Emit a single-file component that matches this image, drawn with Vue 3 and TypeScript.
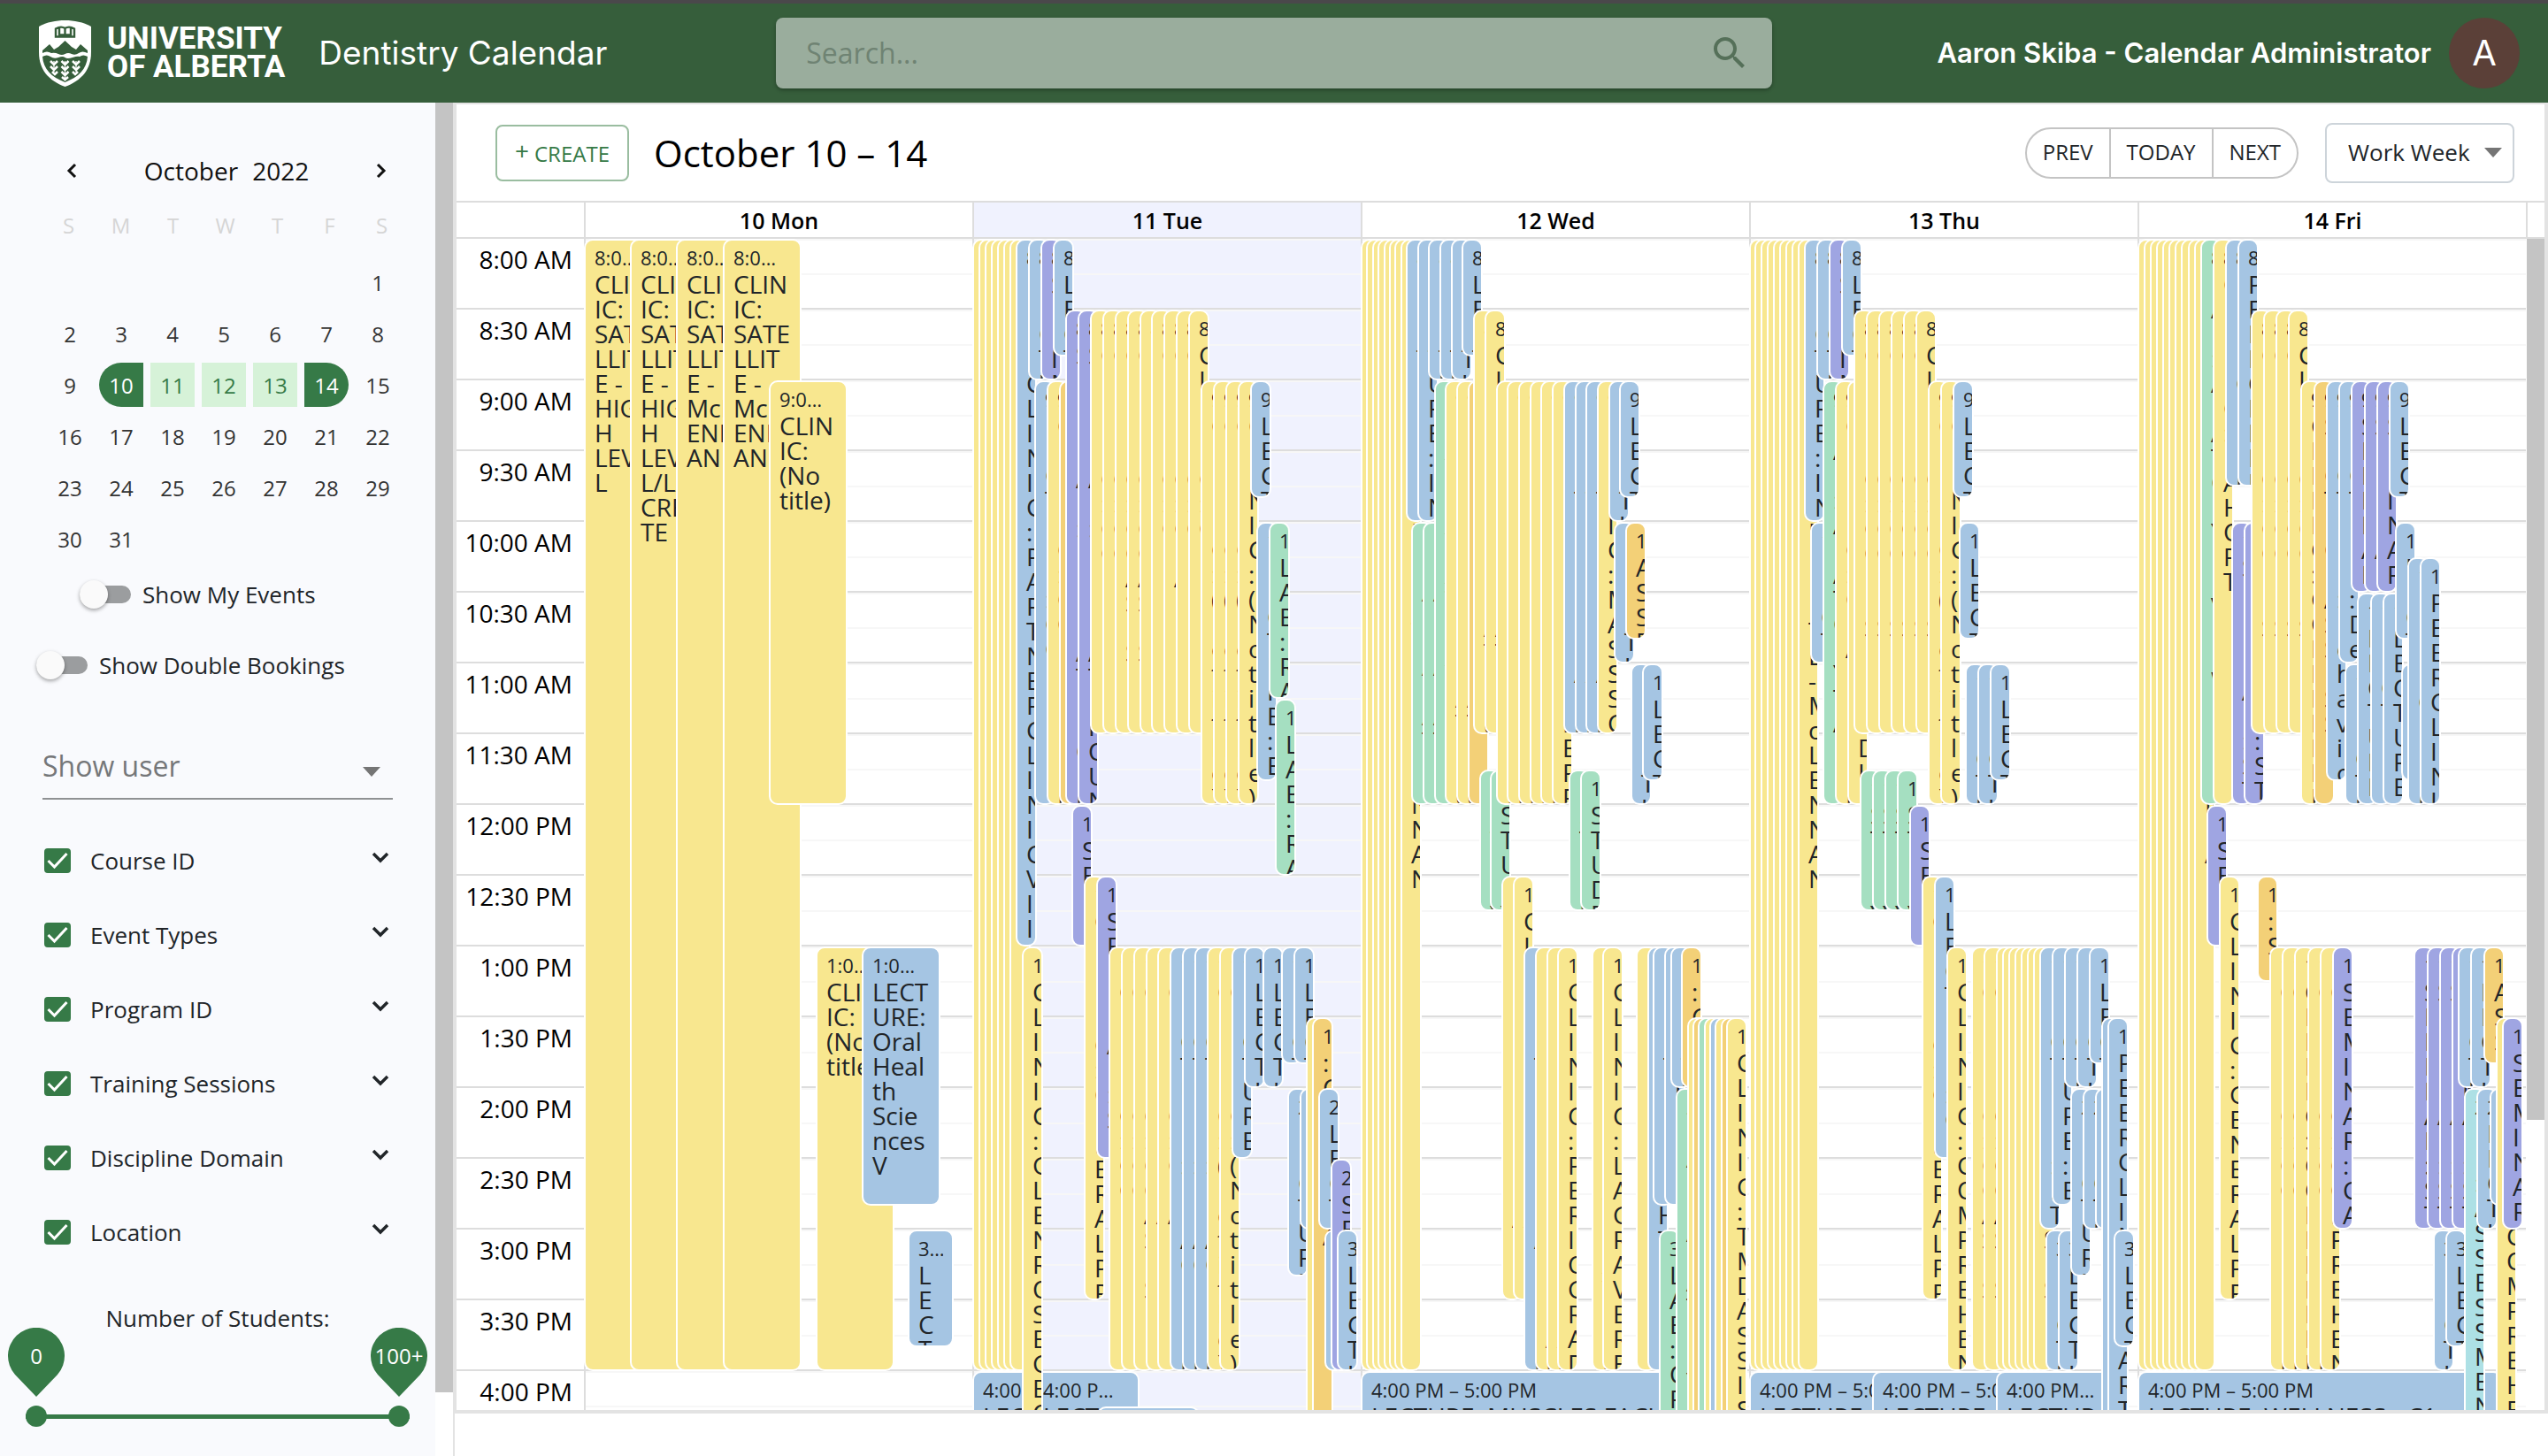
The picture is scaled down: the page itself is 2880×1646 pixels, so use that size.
<script setup lang="ts">
import { computed, reactive, ref } from 'vue'

type Kind = 'clinic' | 'lecture' | 'seminar' | 'lab' | 'assess' | 'peer'

interface CalEvent {
  left: number
  start: number
  end: number
  kind: Kind
  title: string
  width: number
}

interface Day {
  label: string
  today: boolean
  events: CalEvent[]
}

// Event offsets and widths are expressed in units of one day track.
const TRACK = 439
const THIN = 24

const run = (
  lefts: number[],
  start: number,
  end: number,
  kind: Kind,
  title: string,
  width: number = THIN,
): CalEvent[] => lefts.map((left) => ({ left, start, end, kind, title, width }))

// Late-afternoon events lie beneath everything that runs into them.
const layer = (e: CalEvent): number => (e.start >= 480 ? 0 : 1)
const byLeft = (...groups: CalEvent[][]): CalEvent[] =>
  groups.flat().sort((a, b) => layer(a) - layer(b) || a.left - b.left)

// start and end are minutes after 8:00 AM
const days: Day[] = [
  {
    label: '10 Mon',
    today: false,
    events: byLeft(
      run([0], 0, 480, 'clinic', 'CLINIC: SATELLITE - HIGH LEVEL', 89),
      run([52], 0, 480, 'clinic', 'CLINIC: SATELLITE - HIGH LEVEL/LA CRETE', 89),
      run([104, 157], 0, 480, 'clinic', 'CLINIC: SATELLITE - McLENNAN', 89),
      run([209], 60, 240, 'clinic', 'CLINIC: (No title)', 89),
      run([262], 300, 480, 'clinic', 'CLINIC: (No title)', 89),
      run([314], 300, 410, 'lecture', 'LECTURE: Oral Health Sciences V', 89),
      run([366], 420, 470, 'lecture', 'LECTURE: Oral Biology', 52),
    ),
  },
  {
    label: '11 Tue',
    today: true,
    events: byLeft(
      run([0, 7, 14, 21, 28, 35, 42], 0, 480, 'clinic', 'CLINIC: SATELLITE'),
      run([49], 0, 300, 'lecture', 'PEER CLINIC: PARTNER CLINIC VII'),
      run([63], 0, 60, 'lecture', 'LECTURE: PERIO'),
      run([77], 0, 60, 'seminar', 'SEMINAR: PERIO'),
      run([91], 0, 50, 'lecture', 'LECTURE: PERIO'),
      run([70], 60, 240, 'lecture', 'LECTURE: CC'),
      run([84], 60, 240, 'clinic', 'CLINIC: COMPREHENSIVE'),
      run([98], 60, 240, 'assess', 'ASSESSMENT'),
      run([105, 119], 30, 240, 'seminar', 'SEMINAR: PEDIATR ROUNDS'),
      run([133, 147], 30, 210, 'clinic', 'CLINIC: CO'),
      run([161, 175], 30, 210, 'clinic', 'CLINIC: COASIS'),
      run([216], 30, 210, 'clinic', 'CLINIC: GRADE'),
      run([189, 202, 230, 244], 30, 210, 'clinic', 'CLINIC: ORDERED'),
      run([258, 272, 286, 300], 60, 240, 'clinic', 'CLINIC: (No title)'),
      run([314], 60, 110, 'lecture', 'LECTURE: ENDO'),
      run([321], 120, 230, 'lecture', 'LECTURE: ENDO'),
      run([335], 120, 195, 'lab', 'LAB: RADIOLOGY'),
      run([342], 195, 270, 'lab', 'LAB: RADIOLOGY'),
      run([112], 240, 300, 'seminar', 'SEMINAR: ETHICS'),
      run([126], 270, 450, 'clinic', 'CLINIC: GENERAL PRACTICE'),
      run([140], 270, 390, 'seminar', 'SEMINAR: SURGERY'),
      run([56], 300, 540, 'clinic', 'CLINIC: GLENROSE GEORGE'),
      run([154, 168], 300, 480, 'clinic', 'CLINIC: CO'),
      run([182], 300, 480, 'clinic', 'CLINIC: COASIS'),
      run([196, 209], 300, 480, 'clinic', 'CLINIC: GRADE'),
      run([223, 237, 251], 300, 480, 'lecture', 'LECTURE: PLACEMENT'),
      run([265, 279], 300, 480, 'clinic', 'CLINIC: (No title)'),
      run([293], 300, 390, 'lecture', 'LECTURE: ORTHO'),
      run([307, 328], 300, 360, 'lecture', 'LECTURE: ORTHO'),
      run([349, 363], 300, 350, 'lecture', 'LECTURE: ORTHO'),
      run([356], 360, 440, 'lecture', 'LECTURE: ANATOMY'),
      run([370], 360, 420, 'lecture', 'LECTURE: ANATOMY'),
      run([377], 330, 540, 'clinic', 'CLINIC: ORAL SURGERY'),
      run([384], 330, 540, 'assess', ': CLINICA'),
      run([391], 360, 420, 'lecture', 'LECTURE: ANATOMY'),
      run([398], 420, 480, 'lecture', 'LECTURE: ANATOMY'),
      run([405], 390, 480, 'seminar', 'SEMINAR: ETHICS'),
      run([412], 420, 480, 'lecture', 'LECTURE: ANATOMY'),
      run([0], 480, 540, 'lecture', 'LECTURE: PHARMACOLOGY', 119),
      run([68], 480, 540, 'lecture', 'LECTURE: PHARMACOLOGY', 121),
      run([141], 495, 540, 'lecture', 'LECTURE: PHARMACOLOGY', 116),
    ),
  },
  {
    label: '12 Wed',
    today: false,
    events: byLeft(
      run([0, 6, 13, 19, 26, 32, 38, 45], 0, 480, 'clinic', 'CLINIC: SATELLITE - McLENNAN'),
      run([51, 64], 0, 120, 'lecture', 'LECTURE: INTRODUCTION'),
      run([76, 89, 102], 0, 60, 'lecture', 'LECTURE: PERIO'),
      run([114], 0, 50, 'lecture', 'LECTURE: PERIO'),
      run([57, 70], 120, 240, 'lab', 'LAB: ANATOMY'),
      run([83], 60, 240, 'lab', 'LAB: ANATOMY'),
      run([95, 108], 60, 240, 'clinic', 'CLINIC: PEDIATRIC'),
      run([121], 60, 240, 'assess', 'OSCE'),
      run([127, 140], 30, 210, 'clinic', 'CLINIC: PEDIATRIC'),
      run([134, 146], 225, 285, 'lab', 'STUDY'),
      run([153, 165, 178, 191, 203, 216], 60, 240, 'clinic', 'CLINIC: EMERG PERFORM'),
      run([235, 248], 225, 285, 'lab', 'STUDENT'),
      run([229, 242, 254], 60, 210, 'lecture', 'LECTURE: PLACEMENT'),
      run([267], 60, 210, 'clinic', 'CLINIC: MASSSCREEN'),
      run([280], 60, 120, 'lecture', 'LECTURE: ORTHO'),
      run([292], 60, 110, 'lecture', 'LECTURE: ORTHO'),
      run([286], 120, 180, 'lecture', 'LECTURE: ORTHO'),
      run([299], 120, 170, 'assess', 'ASSESSMENT'),
      run([305], 180, 240, 'lecture', 'LECTURE: ORTHO'),
      run([318], 180, 230, 'lecture', 'LECTURE: ORTHO'),
      run([159, 172], 270, 450, 'clinic', 'CLINIC: GENERAL'),
      run([184], 300, 480, 'lecture', 'LECTURE: PLACEMENT'),
      run([197, 210, 222], 300, 480, 'clinic', 'CLINIC: PERIO GRADUATE'),
      run([261, 273], 300, 480, 'clinic', 'CLINIC: LAGRAVERE'),
      run([311], 300, 480, 'clinic', 'CLINIC: PERIO'),
      run([324], 300, 480, 'lecture', 'LECTURE: OHT'),
      run([330, 343], 300, 410, 'lecture', 'LECTURE: OHT'),
      run([350], 300, 360, 'lecture', 'LECTURE: ORTHO'),
      run([362], 300, 360, 'assess', ': CLINICAL'),
      run([337], 420, 540, 'lab', 'LAB: OPERATIVE'),
      run([356], 360, 540, 'lab', 'LAB: ANATOMY'),
      run([369, 388, 400], 330, 540, 'clinic', 'CLINIC: ORTHO'),
      run([375, 407], 330, 540, 'assess', 'OSCE'),
      run([381], 330, 540, 'lab', 'LAB: ANATOMY'),
      run([394], 330, 540, 'lecture', 'LECTURE: ORTHO'),
      run([413], 330, 540, 'clinic', 'CLINIC: TMD ASSISTING'),
      run([0], 480, 540, 'lecture', 'LECTURE: MUSCLES FACIAL', 400),
    ),
  },
  {
    label: '13 Thu',
    today: false,
    events: byLeft(
      run([0, 6, 13, 20, 27, 34, 41, 48, 55], 0, 480, 'clinic', 'CLINIC: SATELLITE - McLENNAN'),
      run([62], 0, 120, 'lecture', 'LECTURE: INTRODUCTION'),
      run([76], 0, 60, 'lecture', 'LECTURE: PERIO'),
      run([90], 0, 60, 'seminar', 'SEMINAR: PERIO'),
      run([104], 0, 50, 'lecture', 'LECTURE: PERIO'),
      run([69], 120, 180, 'lecture', 'LECTURE: PERIO'),
      run([83], 60, 240, 'lab', 'LAB: ANATOMY TA'),
      run([97, 111], 60, 240, 'clinic', 'CLINIC: ORAL MEDIIC'),
      run([118, 132, 146, 160, 174, 188], 30, 210, 'clinic', 'CLINIC: CODES'),
      run([125, 139, 153, 167], 225, 285, 'lab', 'STUDY'),
      run([181], 240, 300, 'seminar', 'SEMINAR: ETHICS'),
      run([202, 216], 60, 240, 'clinic', 'CLINIC: (No title)'),
      run([230], 60, 110, 'lecture', 'LECTURE: ENDO'),
      run([237], 120, 170, 'lecture', 'LECTURE: ENDO'),
      run([244, 258], 180, 240, 'lecture', 'LECTURE: ENDO'),
      run([272], 180, 230, 'lecture', 'LECTURE: ENDO'),
      run([195], 270, 450, 'clinic', 'CLINIC: GENERAL PRACTICE'),
      run([209], 270, 390, 'lecture', 'LECTURE: GENETICS'),
      run([223], 300, 480, 'clinic', 'CLINIC: COMPREHENSIVE'),
      run([251, 265, 279, 286, 293, 300, 307, 314, 321], 300, 480, 'clinic', 'CLINIC: COASIS'),
      run([328], 300, 420, 'lecture', 'LECTURE: ETHICS'),
      run([342], 300, 410, 'lecture', 'LECTURE: ETHICS'),
      run([356, 370], 300, 360, 'lecture', 'LECTURE: ORTHO'),
      run([384], 300, 350, 'lecture', 'LECTURE: ORTHO'),
      run([335, 349], 420, 480, 'lecture', 'LECTURE: ANATOMY'),
      run([363], 360, 440, 'lecture', 'LECTURE: ANATOMY'),
      run([377, 391], 360, 420, 'lecture', 'LECTURE: ANATOMY'),
      run([398, 405], 330, 540, 'lecture', 'PEER CLINIC: PARTNER'),
      run([412], 420, 470, 'lecture', 'LECTURE: ANATOMY'),
      run([0, 139], 480, 540, 'lecture', 'LECTURE: PHARMACOLOGY', 238),
      run([279], 480, 540, 'lecture', 'LECTURE: PHARMACOLOGY', 136),
    ),
  },
  {
    label: '14 Fri',
    today: false,
    events: byLeft(
      run([0, 7, 14, 21, 28, 35, 42, 49, 57, 64], 0, 480, 'clinic', 'CLINIC: SATELLITE - McLENNAN'),
      run([71], 0, 240, 'lab', 'LAB: ANATOMY REVIEW'),
      run([85], 0, 240, 'clinic', 'CLINIC: RAHORT'),
      run([99, 113], 0, 105, 'lecture', 'PEER CLINIC'),
      run([78], 240, 300, 'seminar', 'SEMINAR: ETHICS'),
      run([106, 120], 120, 240, 'seminar', 'SEMINAR: STUDY'),
      run([128, 142, 156, 170], 30, 210, 'clinic', 'CLINIC: CODES'),
      run([184], 60, 240, 'clinic', 'CLINIC: COMPREHENSIVE'),
      run([199], 60, 240, 'assess', 'SECTION ASSESS'),
      run([213], 60, 230, 'lecture', 'LECTURE: Behaviour'),
      run([227], 60, 180, 'lecture', 'LECTURE: Dental'),
      run([241, 256, 270], 60, 150, 'seminar', 'SEMINAR: ETHICS'),
      run([284], 60, 110, 'lecture', 'LECTURE: ENDO'),
      run([234], 180, 240, 'lecture', 'LECTURE: ENDO'),
      run([248, 263, 277], 150, 240, 'lecture', 'LECTURE: ENDO'),
      run([291], 120, 170, 'lecture', 'LECTURE: ENDO'),
      run([298], 180, 230, 'lecture', 'LECTURE: ENDO'),
      run([305, 319], 135, 240, 'lecture', 'PEER CLINIC: PARTNER'),
      run([92], 270, 450, 'clinic', 'CLINIC: GENERAL PRACTICE'),
      run([135], 270, 315, 'assess', ': SIMULATION'),
      run([149, 163, 177, 192, 206], 300, 480, 'clinic', 'CLINIC: COMPREHENSIVE'),
      run([220], 300, 420, 'seminar', 'SEMINAR: CASES'),
      run([312, 327, 341, 355], 300, 420, 'seminar', 'SEMINAR: STATS'),
      run([362, 376], 300, 360, 'lecture', 'LECTURE: ORTHO'),
      run([391], 300, 350, 'assess', 'ASSESSMENT'),
      run([334], 420, 480, 'lecture', 'LECTURE: ANATOMY'),
      run([348], 420, 470, 'lecture', 'LECTURE: ANATOMY'),
      run([369], 360, 540, 'peer', 'PR: ASSESSMENT'),
      run([383], 360, 420, 'lecture', 'LECTURE: ANATOMY'),
      run([398], 360, 410, 'lecture', 'LECTURE: ANATOMY'),
      run([405], 330, 540, 'clinic', 'CLINIC: COMPREHENSIVE'),
      run([412], 330, 420, 'seminar', 'SEMINAR: ETHICS'),
      run([0], 480, 540, 'lecture', 'LECTURE: WELLNESS - C1', 412),
    ),
  },
]

const clock = (minutes: number): string => {
  const total = minutes + 480
  const hour = Math.floor(total / 60)
  const mins = String(total % 60).padStart(2, '0')
  return `${hour > 12 ? hour - 12 : hour}:${mins} ${hour >= 12 ? 'PM' : 'AM'}`
}

const slots = Array.from({ length: 17 }, (_, i) => i * 30)

const SLOT_HEIGHT = 80
const place = (e: CalEvent) => ({
  left: `${(e.left / TRACK) * 100}%`,
  width: `${(e.width / TRACK) * 100}%`,
  top: `${(e.start / 30) * SLOT_HEIGHT}px`,
  height: `${((e.end - e.start) / 30) * SLOT_HEIGHT}px`,
})

const weekdays = ['S', 'M', 'T', 'W', 'T', 'F', 'S']
const monthCells = computed<(number | null)[]>(() => [
  ...Array.from({ length: 6 }, () => null),
  ...Array.from({ length: 31 }, (_, i) => i + 1),
])
const cellClass = (d: number) => ({
  first: d === 10,
  last: d === 14,
  within: d > 10 && d < 14,
})

const filters = reactive([
  { id: 'course', label: 'Course ID', on: true },
  { id: 'types', label: 'Event Types', on: true },
  { id: 'program', label: 'Program ID', on: true },
  { id: 'training', label: 'Training Sessions', on: true },
  { id: 'discipline', label: 'Discipline Domain', on: true },
  { id: 'location', label: 'Location', on: true },
])

const switches = reactive([
  { id: 'mine', label: 'Show My Events', on: false },
  { id: 'double', label: 'Show Double Bookings', on: false },
])

const search = ref('')
const user = ref('')
const view = ref('work_week')
const low = ref(0)
const high = ref(100)
</script>

<template>
  <div class="app">
    <header class="topbar">
      <a class="brand" href="#">
        <svg class="shield" viewBox="0 0 59 75" aria-hidden="true">
          <path fill="#fff" d="M0 7C9 2 19 0 29.500 0S50 2 59 7V36C59 56 48 68 29.500 75C11 68 0 56 0 36Z" />
          <path fill="none" stroke="#365e3b" stroke-width="2.400" d="M19 18.500V9.500Q25 6 29.500 9Q34 6 40 9.500V18.500ZM29.500 9V18M23 9V16.500H36V9" />
          <path fill="#365e3b" d="M4 34L12 27L17 33L22 30L29.500 23L37 30L42 33L47 27L55 34V37Q49 34 45 37T37 38T29.500 38T22 38T14 37Q9 34 4 37Z" />
          <path fill="#365e3b" d="M4 41Q9 38 13 41T22 42T29.500 42T38 42T46 41Q50 38 55 41C54 55 45 64 29.500 70C14 64 5 55 4 41Z" />
          <g fill="none" stroke="#fff" stroke-width="2.600">
            <path d="M13 46L17 50L21 46M13 52L17 56L21 52M15 58L18 61L21 58M25.500 46L29.500 50L33.500 46M25.500 52L29.500 56L33.500 52M25.500 58L29.500 62L33.500 58M26 64L29.500 67L33 64M38 46L42 50L46 46M38 52L42 56L46 52M38 58L41 61L44 58" />
            <path stroke-width="1.200" d="M17 46V58M29.500 46V68M42 46V58" />
          </g>
        </svg>
        <span class="wordmark"><span>UNIVERSITY</span><span>OF ALBERTA</span></span>
      </a>
      <h1 class="product">Dentistry Calendar</h1>
      <div class="searchbox">
        <input v-model="search" type="search" placeholder="Search..." aria-label="Search" />
        <button type="button" aria-label="Run search">
          <svg viewBox="3 3 18 18" aria-hidden="true">
            <path d="M15.500 14h-.79l-.28-.27C15.410 12.590 16 11.110 16 9.500 16 5.910 13.090 3 9.500 3S3 5.910 3 9.500 5.910 16 9.500 16c1.610 0 3.090-.59 4.230-1.570l.27.28v.79l5 4.990L20.490 19l-4.990-5zm-6 0C7.010 14 5 11.990 5 9.500S7.010 5 9.500 5 14 7.010 14 9.500 11.990 14 9.500 14z" />
          </svg>
        </button>
      </div>
      <div class="account">
        <span class="who">Aaron Skiba - Calendar Administrator</span>
        <button type="button" class="avatar" aria-label="Account">A</button>
      </div>
    </header>

    <div class="body">
      <aside class="sidebar">
        <div class="month-head">
          <button type="button" aria-label="Previous month">
            <svg viewBox="0 0 12 18" aria-hidden="true"><path d="M10 2L3 9L10 16" /></svg>
          </button>
          <div class="month-name"><span>October</span><span>2022</span></div>
          <button type="button" aria-label="Next month">
            <svg viewBox="0 0 12 18" aria-hidden="true"><path d="M2 2L9 9L2 16" /></svg>
          </button>
        </div>
        <div class="weekdays">
          <span v-for="(w, i) in weekdays" :key="i">{{ w }}</span>
        </div>
        <div class="dates">
          <template v-for="(d, i) in monthCells" :key="i">
            <span v-if="d === null"></span>
            <button v-else type="button" :class="cellClass(d)">{{ d }}</button>
          </template>
        </div>

        <div class="switches">
          <label v-for="s in switches" :key="s.id" :class="['switch', s.id]">
            <input v-model="s.on" type="checkbox" role="switch" />
            <span>{{ s.label }}</span>
          </label>
        </div>

        <div class="user-pick">
          <select v-model="user" aria-label="Show user">
            <option value="">Show user</option>
            <option value="me">Aaron Skiba</option>
          </select>
          <svg viewBox="0 0 20 11" aria-hidden="true"><path d="M0 0H20L10 11Z" /></svg>
        </div>

        <ul class="filters">
          <li v-for="f in filters" :key="f.id">
            <label>
              <span class="tick">
                <input v-model="f.on" type="checkbox" />
                <svg viewBox="0 0 29 28" aria-hidden="true"><path d="M4 14L11 21L25 6" /></svg>
              </span>
              <span>{{ f.label }}</span>
            </label>
            <button type="button" :aria-label="'Expand ' + f.label">
              <svg viewBox="0 0 20 14" aria-hidden="true"><path d="M2 2L10 10L18 2" /></svg>
            </button>
          </li>
        </ul>

        <div class="students">
          <p>Number of Students:</p>
          <div class="pins">
            <output class="pin">
              <svg viewBox="0 0 64 78" aria-hidden="true"><path d="M32 78L8 53A32 32 0 1 1 56 53Z" /></svg>
              <span>{{ low }}</span>
            </output>
            <output class="pin">
              <svg viewBox="0 0 64 78" aria-hidden="true"><path d="M32 78L8 53A32 32 0 1 1 56 53Z" /></svg>
              <span>{{ high }}+</span>
            </output>
          </div>
          <div class="range">
            <input v-model.number="low" type="range" min="0" max="100" aria-label="Minimum students" />
            <input v-model.number="high" type="range" min="0" max="100" aria-label="Maximum students" />
          </div>
        </div>
      </aside>
      <div class="side-scroll"><div class="thumb"></div></div>

      <main class="main">
        <section class="calendar">
          <div class="toolbar">
            <button type="button" class="create"><span class="plus">+</span>CREATE</button>
            <h2>October 10 – 14</h2>
            <div class="nav">
              <button type="button">PREV</button>
              <button type="button">TODAY</button>
              <button type="button">NEXT</button>
            </div>
            <div class="view">
              <select v-model="view" aria-label="View">
                <option value="work_week">Work Week</option>
                <option value="month">Month</option>
              </select>
              <svg viewBox="0 0 20 11" aria-hidden="true"><path d="M0 0H20L10 11Z" /></svg>
            </div>
          </div>

          <div class="day-heads">
            <div class="corner"></div>
            <div v-for="d in days" :key="d.label" :class="['day-head', { today: d.today }]">{{ d.label }}</div>
            <div class="head-end"></div>
          </div>

          <div class="grid">
            <div class="gutter">
              <div v-for="s in slots" :key="s" class="time">{{ clock(s) }}</div>
            </div>
            <div v-for="d in days" :key="d.label" :class="['day', { today: d.today }]">
              <div class="slots">
                <div v-for="s in slots" :key="s" class="slot"><span></span><span></span></div>
              </div>
              <div class="events">
                <div v-for="(e, i) in d.events" :key="i" :class="['event', e.kind]" :style="place(e)">
                  <div class="event-time">{{ clock(e.start) }} – {{ clock(e.end) }}</div>
                  <div class="event-title">{{ e.title }}</div>
                </div>
              </div>
            </div>
            <div class="grid-scroll"><div class="thumb"></div></div>
          </div>
        </section>
      </main>
    </div>
  </div>
</template>

<style>
body {
  background: #fff;
}
</style>

<style scoped>
.app,
.app * {
  box-sizing: border-box;
}
.app {
  display: flex;
  flex-direction: column;
  height: 100vh;
  overflow: hidden;
  font-family: 'Open Sans', 'Noto Sans', sans-serif;
  font-size: 26px;
  color: #212529;
}
button {
  margin: 0;
  padding: 0;
  border: 0;
  background: none;
  color: inherit;
  font: inherit;
  cursor: pointer;
}
h1,
h2,
p,
ul {
  margin: 0;
  padding: 0;
  font-weight: 400;
  list-style: none;
}
svg {
  display: block;
}

/* top bar */
.topbar {
  display: flex;
  align-items: center;
  flex: none;
  height: 116px;
  padding: 0 32px 0 44px;
  background: #365e3b;
  border-top: 4px solid #4a484b;
  color: #fff;
}
.brand {
  display: flex;
  align-items: center;
  gap: 18px;
  color: #fff;
  text-decoration: none;
}
.shield {
  width: 59px;
  height: 75px;
}
.wordmark {
  display: flex;
  flex-direction: column;
  font: 700 35px/32px Roboto, sans-serif;
}
.product {
  flex: none;
  width: 330px;
  margin-left: 38px;
  white-space: nowrap;
  font: 400 37px/48px Inter, sans-serif;
}
.searchbox {
  display: flex;
  align-items: center;
  width: 1126px;
  height: 80px;
  margin-left: 187px;
  padding: 0 30px 0 32px;
  background: #9aad9d;
  border-radius: 8px;
  box-shadow: 0 2px 4px rgba(0, 0, 0, 0.3);
}
.searchbox input {
  flex: 1;
  border: 0;
  outline: 0;
  background: none;
  font: 400 32px/40px 'Open Sans', sans-serif;
  color: #212529;
}
.searchbox input::placeholder {
  color: #6f8373;
  opacity: 1;
}
.searchbox svg {
  width: 36px;
  height: 36px;
  fill: #557059;
}
.account {
  display: flex;
  align-items: center;
  gap: 20px;
  margin-left: auto;
}
.who {
  font: 600 31px/40px Inter, sans-serif;
}
.avatar {
  width: 80px;
  height: 80px;
  border-radius: 50%;
  background: #5b4038;
  color: #fff;
  font: 400 40px/80px Inter, sans-serif;
}

.body {
  display: flex;
  flex: 1;
  min-height: 0;
}

/* sidebar */
.sidebar {
  flex: none;
  width: 492px;
  background: #f9fafd;
}
.month-head {
  display: flex;
  align-items: center;
  justify-content: space-between;
  padding: 57px 55px 0 75px;
}
.month-head svg {
  width: 12px;
  height: 18px;
}
.month-head path {
  fill: none;
  stroke: #111;
  stroke-width: 3;
}
.month-name {
  display: flex;
  gap: 16px;
  font-size: 28px;
  line-height: 40px;
  color: #111;
}
.weekdays {
  display: grid;
  grid-template-columns: repeat(7, 59px);
  margin-top: 24px;
  padding-left: 48px;
  text-align: center;
  font-size: 24px;
  line-height: 36px;
  color: #d5d5d5;
}
.dates {
  display: grid;
  grid-template-columns: repeat(7, 50px);
  grid-auto-rows: 50px;
  gap: 8px;
  margin-top: 21px;
  padding-left: 54px;
  font-size: 24px;
  color: #333;
}
.dates .first,
.dates .last {
  background: #367a47;
  color: #fff;
}
.dates .first {
  border-radius: 25px 0 0 25px;
}
.dates .last {
  border-radius: 0 25px 25px 0;
}
.dates .within {
  background: #d6f2d8;
  color: #367a47;
}
.switches {
  margin-top: -2px;
}
.switch {
  display: flex;
  align-items: center;
  gap: 13px;
  height: 80px;
  padding-left: 90px;
}
.switch.double {
  padding-left: 41px;
}
.switch input {
  appearance: none;
  display: flex;
  align-items: center;
  width: 58px;
  height: 20px;
  margin: 0;
  border-radius: 10px;
  background: #9b9d9f;
}
.switch input::before {
  content: '';
  width: 32px;
  height: 32px;
  border-radius: 50%;
  background: #fafafa;
  box-shadow: 0 2px 4px rgba(0, 0, 0, 0.35);
}
.switch input:checked {
  justify-content: flex-end;
}
.user-pick {
  display: grid;
  align-items: center;
  margin: 36px 48px 0;
  border-bottom: 2px solid #8f9193;
}
.user-pick select,
.user-pick svg,
.view select,
.view svg {
  grid-area: 1 / 1;
}
.user-pick select {
  appearance: none;
  width: 100%;
  height: 74px;
  padding: 2px 0 0;
  border: 0;
  background: none;
  font: 400 32px/40px 'Open Sans', sans-serif;
  color: #757779;
}
.user-pick svg {
  justify-self: end;
  width: 20px;
  height: 11px;
  margin: 14px 14px 0 0;
  pointer-events: none;
}
.user-pick path,
.view path {
  fill: #757575;
}
.filters {
  margin-top: 27px;
}
.filters li {
  display: flex;
  align-items: center;
  justify-content: space-between;
  height: 84px;
  padding: 0 52px 0 50px;
}
.filters label {
  display: flex;
  align-items: center;
  gap: 22px;
}
.tick {
  display: grid;
}
.tick input,
.tick svg {
  grid-area: 1 / 1;
  width: 30px;
  height: 28px;
  margin: 0;
}
.tick input {
  appearance: none;
  border: 2px solid #367a47;
  border-radius: 4px;
}
.tick input:checked {
  background: #367a47;
}
.tick svg {
  pointer-events: none;
}
.tick path {
  fill: none;
  stroke: #fff;
  stroke-width: 3;
}
.filters button svg {
  width: 20px;
  height: 14px;
  margin-bottom: 6px;
}
.filters button path {
  fill: none;
  stroke: #212529;
  stroke-width: 3.500;
}
.students {
  padding-top: 37px;
}
.students p {
  line-height: 36px;
  text-align: center;
}
.pins {
  display: flex;
  justify-content: space-between;
  padding: 0 9px;
  margin-top: -7px;
}
.pin {
  display: grid;
  justify-items: center;
  height: 78px;
}
.pin svg,
.pin span {
  grid-area: 1 / 1;
}
.pin svg {
  width: 64px;
  height: 78px;
  fill: #367a47;
}
.pin span {
  z-index: 1;
  font-size: 24px;
  line-height: 64px;
  color: #fff;
}
.range {
  display: grid;
  align-items: center;
  height: 24px;
  margin: 10px 29px 0;
  background: linear-gradient(#367a47, #367a47) center / 100% 5px no-repeat;
}
.range input {
  appearance: none;
  grid-area: 1 / 1;
  width: 100%;
  height: 24px;
  margin: 0;
  background: none;
  pointer-events: none;
}
.range input::-webkit-slider-thumb {
  appearance: none;
  width: 24px;
  height: 24px;
  border-radius: 50%;
  background: #367a47;
  pointer-events: auto;
}
.side-scroll {
  flex: none;
  width: 20px;
}
.side-scroll .thumb {
  height: 95.300%;
  background: #c4c4c4;
}

/* calendar */
.main {
  flex: 1;
  min-width: 0;
  padding-bottom: 48px;
  border-left: 2px solid #e3e3e3;
}
.calendar {
  display: flex;
  flex-direction: column;
  height: 100%;
  border: 2px solid #e3e3e3;
  border-right-width: 4px;
  border-bottom-width: 4px;
}
.toolbar {
  display: flex;
  align-items: center;
  flex: none;
  height: 109px;
  padding: 0 34px 0 44px;
}
.create {
  width: 151px;
  height: 64px;
  padding-top: 2px;
  border: 2px solid #9abda0;
  border-radius: 8px;
  color: #367a47;
  font-size: 24px;
}
.plus {
  display: inline-block;
  margin-right: 6px;
  font-size: 28px;
  line-height: 24px;
  vertical-align: 2px;
}
.toolbar h2 {
  margin-left: 28px;
  font-size: 42px;
  line-height: 56px;
  color: #000;
}
.nav {
  display: flex;
  height: 58px;
  margin-left: auto;
}
.nav button {
  padding: 0 18px 2px;
  border: 2px solid #c4c4c4;
  border-left-width: 0;
  font-size: 24px;
  color: #212529;
}
.nav button:first-child {
  border-left-width: 2px;
  border-radius: 29px 0 0 29px;
}
.nav button:last-child {
  border-radius: 0 29px 29px 0;
}
.view {
  display: grid;
  align-items: center;
  margin-left: 30px;
}
.view select {
  appearance: none;
  width: 214px;
  height: 68px;
  padding: 0 0 2px 24px;
  border: 2px solid #cdd4da;
  border-radius: 8px;
  background: none;
  font: 400 26px/36px 'Open Sans', sans-serif;
  color: #212529;
}
.view svg {
  justify-self: end;
  width: 20px;
  height: 11px;
  margin-right: 14px;
  pointer-events: none;
}
.day-heads {
  display: flex;
  flex: none;
  height: 43px;
  border-top: 2px solid #ddd;
  border-bottom: 2px solid #ddd;
}
.corner {
  width: 144px;
}
.day-head {
  flex: 1;
  border-left: 2px solid #ddd;
  text-align: center;
  font-size: 25px;
  font-weight: 600;
  line-height: 40px;
  color: #000;
}
.head-end {
  width: 21px;
  border-left: 2px solid #ddd;
}
.day-head.today,
.day.today {
  background: #f0f2fe;
}
.grid {
  display: flex;
  flex: 1;
  min-height: 0;
  overflow: hidden;
}
.gutter {
  flex: none;
  width: 144px;
}
.time {
  height: 80px;
  padding: 3px 13px 0 0;
  border-bottom: 2px solid #ddd;
  text-align: right;
  font-size: 28px;
  line-height: 40px;
  color: #000;
}
.day {
  position: relative;
  flex: 1;
  height: 1360px;
}
.slots {
  border-left: 2px solid #ddd;
}
.slot {
  display: flex;
  flex-direction: column;
  height: 80px;
  border-bottom: 2px solid #ddd;
}
.slot span {
  flex: 1;
  border-top: 2px solid #f7f7f7;
}
.events {
  position: absolute;
  inset: 0;
}
.event {
  position: absolute;
  padding: 3px 10px;
  border: 2px solid #fff;
  border-radius: 10px;
  overflow: hidden;
}
.event-time {
  overflow: hidden;
  padding-right: 10px;
  white-space: nowrap;
  text-overflow: ellipsis;
  font-size: 22px;
  line-height: 32px;
}
.event-title {
  font-size: 28px;
  line-height: 28px;
  overflow-wrap: break-word;
}
.clinic {
  background: #f8e78f;
}
.lecture {
  background: #a5c5e3;
}
.seminar {
  background: #9fa5e2;
}
.lab {
  background: #a5dfc1;
}
.assess {
  background: #f3d077;
}
.peer {
  background: #ade0e5;
}
.grid-scroll {
  flex: none;
  width: 21px;
  padding-left: 1px;
}
.grid-scroll .thumb {
  height: 75.200%;
  background: #c4c4c4;
}
</style>
